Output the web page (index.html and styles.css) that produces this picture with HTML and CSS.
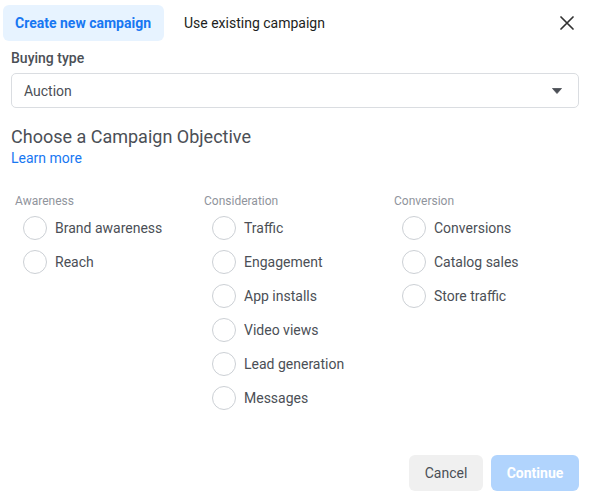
FILE: index.html
```html
<!DOCTYPE html>
<html>
<head>
<meta charset="utf-8">
<link rel="stylesheet" href="styles.css">
</head>
<body>
<div class="dialog">
  <div class="header">
    <div class="tabs">
      <div class="tab active">Create new campaign</div>
      <div class="tab">Use existing campaign</div>
    </div>
    <button class="close" aria-label="Close">
      <svg width="14" height="14" viewBox="0 0 14 14"><path d="M1 1L13 13M13 1L1 13" stroke="#333" stroke-width="1.7" stroke-linecap="round" fill="none"/></svg>
    </button>
  </div>
  <div class="body">
    <div class="label">Buying type</div>
    <div class="select">
      <span>Auction</span>
      <svg class="caret" width="10" height="6" viewBox="0 0 10 6"><path d="M0.5 0.5H9.5L5 5.5Z" fill="#4b4f56" stroke="#4b4f56" stroke-width="0.8" stroke-linejoin="round"/></svg>
    </div>
    <h2 class="title">Choose a Campaign Objective</h2>
    <a class="learn" href="#">Learn more</a>
    <div class="columns">
      <div class="col">
        <div class="col-head">Awareness</div>
        <div class="opt"><span class="radio"></span>Brand awareness</div>
        <div class="opt"><span class="radio"></span>Reach</div>
      </div>
      <div class="col">
        <div class="col-head">Consideration</div>
        <div class="opt"><span class="radio"></span>Traffic</div>
        <div class="opt"><span class="radio"></span>Engagement</div>
        <div class="opt"><span class="radio"></span>App installs</div>
        <div class="opt"><span class="radio"></span>Video views</div>
        <div class="opt"><span class="radio"></span>Lead generation</div>
        <div class="opt"><span class="radio"></span>Messages</div>
      </div>
      <div class="col">
        <div class="col-head">Conversion</div>
        <div class="opt"><span class="radio"></span>Conversions</div>
        <div class="opt"><span class="radio"></span>Catalog sales</div>
        <div class="opt"><span class="radio"></span>Store traffic</div>
      </div>
    </div>
  </div>
  <div class="footer">
    <button class="btn cancel">Cancel</button>
    <button class="btn continue">Continue</button>
  </div>
</div>
</body>
</html>
```

FILE: styles.css
```css
* { box-sizing: border-box; }
html, body { margin: 0; padding: 0; background: #fff; }
body {
  font-family: Roboto, "Liberation Sans", Arial, sans-serif;
  font-size: 14px;
  color: #4b4f56;
}
.dialog {
  height: 501px;
  display: flex;
  flex-direction: column;
  padding: 5px 14px 10px 11px;
}
.header {
  display: flex;
  align-items: center;
  justify-content: space-between;
  margin-left: -8px;
}
.tabs { display: flex; gap: 8px; }
.tab {
  height: 36px;
  padding: 0 13px 0 12px;
  display: flex;
  align-items: center;
  border-radius: 6px;
  font-size: 14px;
  color: #1c1e21;
  line-height: 18px;
}
.tab.active {
  background: #e7f3ff;
  color: #1877f2;
  font-weight: 700;
}
.close {
  border: 0;
  background: none;
  padding: 0;
  width: 14px;
  height: 14px;
  margin-right: 5px;
  display: flex;
}
.label {
  margin-top: 8px;
  font-weight: 500;
  font-size: 14px;
  line-height: 18px;
  color: #4b4f56;
}
.select {
  margin-top: 6px;
  height: 35px;
  border: 1px solid #dadde1;
  border-radius: 5px;
  display: flex;
  align-items: center;
  justify-content: space-between;
  padding: 0 16px 0 12px;
  color: #4b4f56;
}
.title {
  margin: 17px 0 0;
  font-size: 18px;
  font-weight: 400;
  line-height: 24px;
  color: #4b4f56;
}
.learn {
  display: block;
  color: #1877f2;
  text-decoration: none;
  line-height: 18px;
}
.columns {
  display: grid;
  grid-template-columns: 189px 190px 190px;
  margin-top: 26px;
  padding-left: 4px;
}
.col-head {
  font-size: 12px;
  line-height: 16px;
  color: #90949c;
  margin-bottom: 2px;
}
.opt {
  height: 34px;
  display: flex;
  align-items: center;
  padding-left: 8px;
  color: #4b4f56;
}
.radio {
  width: 24px;
  height: 24px;
  border: 1px solid #ccd0d5;
  border-radius: 50%;
  margin-right: 8px;
  flex: none;
}
.footer {
  margin-top: auto;
  display: flex;
  justify-content: flex-end;
  gap: 8px;
}
.btn {
  height: 36px;
  border: 0;
  border-radius: 6px;
  font-family: inherit;
  font-size: 14px;
  padding: 0;
}
.cancel {
  width: 74px;
  background: #f0f0f0;
  color: #4b4f56;
}
.continue {
  width: 88px;
  background: #b1d4fd;
  color: #fff;
  font-weight: 700;
}
```
